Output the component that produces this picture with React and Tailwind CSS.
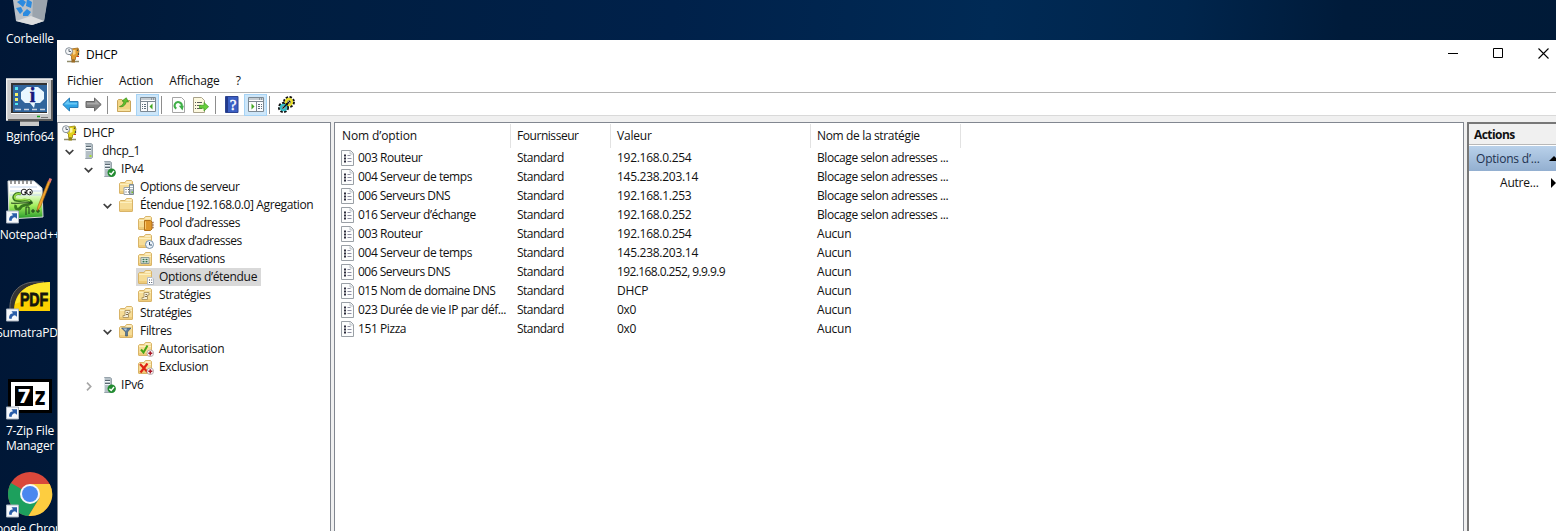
import React from "react";

/* ---------- small building blocks ---------- */

function Svg({ w = 16, h = 16, vb, className = "", children }) {
  return (
    <svg width={w} height={h} viewBox={vb || `0 0 ${w} ${h}`} className={`block shrink-0 ${className}`}>
      {children}
    </svg>
  );
}

function FolderShape() {
  return (
    <>
      <path d="M.5 4.500 V14 Q.5 14.500 1 14.500 H13 Q13.500 14.500 13.500 14 V2.500 L12.500 1.500 H7.500 L6 3.500 H1.500Z" fill="#f6dc96" stroke="#d9b468" strokeWidth="1" />
      <path d="M7.500 2.500 H12.500 V3.500 H7z" fill="#fffbe8" />
      <path d="M1 5.500 H13" stroke="#fdf0c0" strokeWidth="1" />
      <path d="M1 12 H13 V14 H1z" fill="#eecb7a" />
    </>
  );
}

function RedBadge() {
  return (
    <>
      <circle cx="12.300" cy="12.300" r="3.300" fill="#fff" stroke="#a89a9c" strokeWidth=".8" />
      <path d="M12.300 10.200 V14.400 M10.300 12.300 H14.400" stroke="#a81a2a" strokeWidth="1.600" />
    </>
  );
}

function ServerShape() {
  return (
    <>
      <path d="M4.500 .5 H10 L11.500 1.500 V14.500 L10.500 15.500 H4.500z" fill="#b4bfc6" stroke="#98a4ac" strokeWidth="1" />
      <path d="M4.500 1 V15" stroke="#dde4e8" />
      <path d="M5 3.500 H10 M5 6.500 H10" stroke="#5b6972" strokeWidth="1" />
      <path d="M5 4.500 H10 M5 7.500 H10" stroke="#f4f8fa" strokeWidth="1" />
      <path d="M8.500 12 h2 v2 h-2z" fill="#a9e030" />
    </>
  );
}

function DhcpShape({ main, light, dark }) {
  return (
    <>
      <path d="M8 12 V14 M2 14.500 H14" stroke="#8f8c6b" strokeWidth="1.300" />
      <path d="M6.500 13 h3.500 v2.500 h-3.500z" fill={dark} />
      <path d="M6 2 L13 1 L14 4 L13 9 L10.500 10 V12.500 H6.500 V9 L5 8z" fill={main} stroke={dark} strokeWidth=".8" />
      <path d="M8 3 H10.500 V7 L8 8z" fill={light} />
      <path d="M12.500 2.500 V4 M13.500 6 V8" stroke="#4b4b33" strokeWidth="1.200" />
      <path d="M12 9.500 h2" stroke="#d33b25" strokeWidth="1.200" />
      <circle cx="4" cy="4.200" r="3.500" fill="#f4f6f8" stroke="#87909a" />
      <path d="M4 2 V4.500 H6" stroke="#4e5a66" fill="none" strokeWidth=".9" />
    </>
  );
}

const folderOverlays = {
  folder: null,
  serverOptions: (
    <>
      <path d="M5 8.500 h6 v7 h-6z" fill="#fff" stroke="#9aa3ab" />
      <path d="M6.500 10.500h1M9 10.500h1M6.500 13h1M9 13h1" stroke="#555" strokeWidth="1.200" />
      <path d="M10.500 5.500 h4 v10 h-4z" fill="#aebcc4" stroke="#7c8a92" />
      <path d="M11 7.500h3M11 9.500h3" stroke="#fff" />
      <path d="M12.500 12.500h1.500v1.500h-1.500z" fill="#79bd24" />
    </>
  ),
  pool: (
    <>
      <path d="M6.500 5.500 H12.500 L14 7 V14 L12.500 15.500 H6.500z" fill="#e0972b" stroke="#b0701a" />
      <path d="M7.500 6.500 V14" stroke="#f9c66b" />
      <path d="M14.500 7.500h1M14.500 10h1M14.500 12.500h1" stroke="#7c3a10" strokeWidth="1.300" />
    </>
  ),
  leases: (
    <>
      <circle cx="11.500" cy="11.500" r="4" fill="#eef4fa" stroke="#7690aa" />
      <path d="M11.500 9 V12 H14" fill="none" stroke="#34506e" />
    </>
  ),
  reservations: (
    <>
      <path d="M3 6.500 h8 v6 h-8z" fill="#e9f1ea" stroke="#8e9a94" />
      <path d="M4.500 8.500h2M7.500 8.500h2M4.500 10.700h2M7.500 10.700h2" stroke="#36724f" strokeWidth="1.500" />
    </>
  ),
  scopeOptions: (
    <>
      <path d="M9.500 8.500 h4.500 l1.500 1.500 v5.500 h-6z" fill="#fff" stroke="#b3bbc6" />
      <path d="M11 11h1M13.200 11h1M11 13.500h1M13.200 13.500h1" stroke="#484d57" strokeWidth="1.200" />
    </>
  ),
  policies: (
    <>
      <path d="M6 5.500 H11 V8 H9.500 V12.500 H4 V10.500 H6z" fill="#f4efdc" stroke="#b19a68" />
      <path d="M7.500 7.500H9M7 9.500h2" stroke="#816e4b" />
    </>
  ),
  filters: (
    <>
      <path d="M2.500 5 H12 L8.500 9 V13 H6.500 V9z" fill="#58799a" stroke="#36506b" strokeWidth=".6" />
      <path d="M4 5.600 H8 L7 8z" fill="#b5cbdd" />
    </>
  ),
  allow: (
    <>
      <path d="M3 8.500 L5.500 11.500 L9.500 4.500" stroke="#45a516" strokeWidth="2" fill="none" />
      <RedBadge />
    </>
  ),
  deny: (
    <>
      <path d="M2 5 L9.500 13 M9.500 4.500 L2.500 13.500" stroke="#df2313" strokeWidth="2.200" fill="none" />
      <RedBadge />
    </>
  ),
};

function TreeIcon({ kind }) {
  if (kind === "dhcp")
    return (
      <Svg>
        <DhcpShape main="#e4d21b" light="#faf5a0" dark="#948514" />
      </Svg>
    );
  if (kind === "server" || kind === "serverOk")
    return (
      <Svg>
        <ServerShape />
        {kind === "serverOk" && (
          <>
            <circle cx="11.700" cy="11.700" r="4.200" fill="#228b31" />
            <path d="M9.400 11.800 L11.200 13.500 L14 10" stroke="#fff" strokeWidth="1.400" fill="none" />
          </>
        )}
      </Svg>
    );
  return (
    <Svg>
      <FolderShape />
      {folderOverlays[kind]}
    </Svg>
  );
}

function Chevron({ state }) {
  return (
    <span className="flex h-[18px] w-[19px] shrink-0 items-center justify-center pr-[4px] pt-0.5">
      {state === "open" && (
        <Svg w={9} h={6}>
          <path d="M.7 1 L4.500 4.700 L8.300 1" fill="none" stroke="#404040" strokeWidth="1.700" />
        </Svg>
      )}
      {state === "closed" && (
        <Svg w={6} h={9}>
          <path d="M1 .7 L4.700 4.500 L1 8.300" fill="none" stroke="#a6a6a6" strokeWidth="1.700" />
        </Svg>
      )}
    </span>
  );
}

/* ---------- console tree ---------- */

const indent = ["pl-[4px]", "pl-[4px]", "pl-[23px]", "pl-[42px]", "pl-[61px]"];

const tree = [
  { level: 0, icon: "dhcp", label: "DHCP" },
  { level: 1, icon: "server", label: "dhcp_1", tracking: "tracking-[-0.3px]", state: "open" },
  { level: 2, icon: "serverOk", label: "IPv4", state: "open" },
  { level: 3, icon: "serverOptions", label: "Options de serveur", tracking: "tracking-[-0.42px]" },
  { level: 3, icon: "folder", label: "Étendue [192.168.0.0] Agregation", tracking: "tracking-[-0.39px]", state: "open" },
  { level: 4, icon: "pool", label: "Pool d’adresses", tracking: "tracking-[-0.38px]" },
  { level: 4, icon: "leases", label: "Baux d’adresses", tracking: "tracking-[-0.5px]" },
  { level: 4, icon: "reservations", label: "Réservations", tracking: "tracking-[-0.5px]" },
  { level: 4, icon: "scopeOptions", label: "Options d’étendue", tracking: "tracking-[-0.31px]", selected: true },
  { level: 4, icon: "policies", label: "Stratégies", tracking: "tracking-[-0.4px]" },
  { level: 3, icon: "policies", label: "Stratégies", tracking: "tracking-[-0.4px]" },
  { level: 3, icon: "filters", label: "Filtres", tracking: "tracking-[-0.3px]", state: "open" },
  { level: 4, icon: "allow", label: "Autorisation", tracking: "tracking-[-0.28px]" },
  { level: 4, icon: "deny", label: "Exclusion", tracking: "tracking-[-0.35px]" },
  { level: 2, icon: "serverOk", label: "IPv6", state: "closed" },
];

function TreeRow({ level, icon, label, state, selected, tracking = "" }) {
  return (
    <div className={`flex h-[18px] items-center ${indent[level]}`}>
      {level > 0 && <Chevron state={state} />}
      <div className={`flex h-[18px] items-center pr-[4px] ${selected ? "-ml-[2px] bg-[#d9d9d9] pl-[2px]" : ""}`}>
        <TreeIcon kind={icon} />
        <span className={`ml-[5px] whitespace-nowrap leading-[18px] ${tracking}`}>{label}</span>
      </div>
    </div>
  );
}

/* ---------- option list ---------- */

const options = [
  ["003 Routeur", "192.168.0.254", "Blocage selon adresses ..."],
  ["004 Serveur de temps", "145.238.203.14", "Blocage selon adresses ..."],
  ["006 Serveurs DNS", "192.168.1.253", "Blocage selon adresses ..."],
  ["016 Serveur d’échange", "192.168.0.252", "Blocage selon adresses ..."],
  ["003 Routeur", "192.168.0.254", "Aucun"],
  ["004 Serveur de temps", "145.238.203.14", "Aucun"],
  ["006 Serveurs DNS", "192.168.0.252, 9.9.9.9", "Aucun"],
  ["015 Nom de domaine DNS", "DHCP", "Aucun"],
  ["023 Durée de vie IP par déf...", "0x0", "Aucun"],
  ["151 Pizza", "0x0", "Aucun"],
];

function OptionIcon() {
  return (
    <Svg w={14} h={16}>
      <path d="M.5 .5 H9.500 L12.500 3.500 V15.500 H.5z" fill="#fcfdfd" stroke="#9aa0a6" />
      <path d="M9 1 V4 H12" fill="#eceff2" stroke="#b3b9bf" strokeWidth=".8" />
      <path d="M3 5.500h2M3 8.500h2M3 11.500h2" stroke="#2d2d3c" strokeWidth="2" />
      <path d="M6.500 5.500h3M6.500 8.500h4M6.500 11.500h4" stroke="#8e8ea2" />
    </Svg>
  );
}

function OptionList() {
  return (
    <div className="mr-[3px] w-[1130px] shrink-0 border border-b-0 border-[#828790] bg-white">
      <div className="flex h-[25px] pt-px leading-[24px]">
        <div className="w-[176px] border-r border-[#e2e2e2] pl-[7px] tracking-[-0.1px]">Nom d’option</div>
        <div className="w-[100px] border-r border-[#e2e2e2] pl-[6px] tracking-[-0.45px]">Fournisseur</div>
        <div className="w-[200px] border-r border-[#e2e2e2] pl-[6px]">Valeur</div>
        <div className="w-[150px] border-r border-[#e2e2e2] pl-[6px] tracking-[-0.35px]">Nom de la stratégie</div>
      </div>
      {options.map(([name, value, policy], i) => (
        <div key={i} className="flex h-[19px] whitespace-nowrap leading-[19px] tracking-[-0.42px]">
          <div className="flex w-[182px] items-center pl-[6px]">
            <OptionIcon />
            <span className={`ml-[3px] ${name.includes("DNS") ? "tracking-[-0.5px]" : ""}`}>{name}</span>
          </div>
          <div className="w-[100px] tracking-[-0.55px]">Standard</div>
          <div className={`w-[200px] ${value.includes(",") ? "tracking-[-0.6px]" : "tracking-[-0.28px]"}`}>{value}</div>
          <div className={`w-[150px] ${policy === "Aucun" ? "tracking-[-0.2px]" : ""}`}>{policy}</div>
        </div>
      ))}
    </div>
  );
}

/* ---------- toolbar ---------- */

function Arrow({ flip, top, bottom, edge }) {
  return (
    <Svg w={17} h={15} className={flip ? "-scale-x-100" : ""}>
      <path d="M.8 7.500 L7.500 1 V4.500 H16 V10.500 H7.500 V14z" fill={bottom} stroke={edge} strokeWidth="1" />
      <path d="M2.300 7.200 L6.700 3 V5.700 H15 V7.500 H2.300z" fill={top} />
    </Svg>
  );
}

function PaneIcon({ right }) {
  return (
    <Svg w={16} h={15}>
      <path d="M.5 .5 H15.500 V14.500 H.5z" fill="#fbfcfd" stroke="#7d8993" />
      <path d="M1 1 H15 V3 H1z" fill="#c5ccd2" />
      <path d="M11 2h1M13 2h1" stroke="#59636b" />
      <path d="M.5 4.500 H15.500" stroke="#7d8993" />
      <g transform={right ? "translate(16 0) scale(-1 1)" : undefined}>
        <path d="M7.500 4.500 V14.500" stroke="#7d8993" />
        <path d="M2 7.500h1M4 7.500h2M2 9.500h1M4 9.500h2M2 11.500h1M4 11.500h2" stroke="#5d6d7b" />
        <path d="M12.500 6.500 V12.500 L9.500 9.500z" fill="#43a723" />
      </g>
    </Svg>
  );
}

function Separator({ className }) {
  return <span className={`h-[18px] w-px shrink-0 bg-[#8d8d8d] ${className}`} />;
}

function Toolbar() {
  return (
    <div className="flex h-[23px] items-center border-b border-[#d9d9d9] bg-white pl-[5px] pt-px">
      <Arrow top="#6cc8f4" bottom="#2fa4e6" edge="#2b7cb5" />
      <span className="w-[6px]" />
      <Arrow flip top="#a9a9a9" bottom="#848484" edge="#686868" />
      <Separator className="ml-[5px] mr-[9px]" />
      <Svg w={15} h={15}>
        <path d="M.5 3.500 L1.500 2.500 H5 L6 3.500 H13 L13.500 4 V14.500 H.5z" fill="#f2d584" stroke="#c9a55a" />
        <path d="M1 13 H13" stroke="#fbedb8" />
        <path d="M2.500 9.500 C5 9 6.500 7 7 4.500 L5 4 L9.300 .8 L11.500 5 L9.300 4.700 C8.500 8 6 10.500 2.500 9.500z" fill="#62c32f" stroke="#3c8d19" strokeWidth=".7" />
      </Svg>
      <span className="ml-[4px] flex h-[22px] w-[23px] items-center justify-center border border-[#a6d3f5] bg-[#cde6f9]">
        <PaneIcon />
      </span>
      <Separator className="ml-[2px] mr-[10px]" />
      <Svg w={13} h={16}>
        <path d="M.5 .5 H9.500 L12.500 3.500 V15.500 H.5z" fill="#fdfdfd" stroke="#a5a5a5" />
        <path d="M4.300 11.700 A3.600 3.600 0 1 1 9.800 9" fill="none" stroke="#3eae46" strokeWidth="2" />
        <path d="M6.800 8.800 H11.800 L10.500 13.500z" fill="#3eae46" />
      </Svg>
      <span className="w-[8px]" />
      <Svg w={16} h={16}>
        <path d="M.5 .5 H8.500 L11.500 3.500 V15.500 H.5z" fill="#fdf9df" stroke="#a9a28a" />
        <path d="M2 5.500h1M4 5.500h5M2 8.500h1M4 8.500h4M2 11.500h1M4 11.500h5" stroke="#5a5a5a" />
        <path d="M6.500 8.300 H11 V5.500 L15.600 9.700 L11 14 V11.200 H6.500z" fill="#68cf3c" stroke="#3f9d22" strokeWidth=".7" />
      </Svg>
      <Separator className="ml-[6px] mr-[9px]" />
      <Svg w={14} h={17}>
        <path d="M.5 .5 H13 V16.500 H.5z" fill="#3b5fc4" stroke="#2d4492" />
        <path d="M1 1 H3 V16 H1z" fill="#223a8c" />
        <text x="8" y="13.500" textAnchor="middle" fill="#fff" stroke="#fff" strokeWidth=".4" fontSize="15" fontFamily="Liberation Serif, serif">?</text>
      </Svg>
      <span className="ml-[5px] flex h-[22px] w-[23px] items-center justify-center border border-[#a6d3f5] bg-[#cde6f9]">
        <PaneIcon right />
      </span>
      <Separator className="ml-[2px] mr-[8px]" />
      <Svg w={17} h={17}>
        <circle cx="11" cy="6" r="3.700" fill="none" stroke="#111" strokeWidth="4.500" strokeDasharray="1.800 1.100" />
        <circle cx="11" cy="6" r="3" fill="none" stroke="#e9e02a" strokeWidth="2.300" />
        <circle cx="5.500" cy="11.500" r="3.400" fill="none" stroke="#111" strokeWidth="4.300" strokeDasharray="1.800 1.100" />
        <circle cx="5.500" cy="11.500" r="2.700" fill="none" stroke="#35bcc6" strokeWidth="2.300" />
        <path d="M4.500 12.500 L12 5" stroke="#111" strokeWidth="1.300" />
      </Svg>
    </div>
  );
}

/* ---------- MMC window ---------- */

function TitleBar() {
  return (
    <div className="flex h-[30px] items-center bg-white pl-[8px] text-black">
      <Svg className="mb-px">
        <DhcpShape main="#e09a2c" light="#f8d488" dark="#9c6b24" />
      </Svg>
      <span className="ml-[5px]">DHCP</span>
      <div className="mb-[3px] ml-auto flex items-center pr-[7px]">
        <Svg w={11} h={11}>
          <path d="M0 5.500 H10" stroke="#000" />
        </Svg>
        <Svg w={11} h={11} className="mx-[34px]">
          <path d="M.5 .5 H9.500 V9.500 H.5z" fill="none" stroke="#000" />
        </Svg>
        <Svg w={11} h={11}>
          <path d="M.5 .5 L10.500 10.500 M10.500 .5 L.5 10.500" stroke="#000" strokeWidth="1.100" />
        </Svg>
      </div>
    </div>
  );
}

function ActionsPane() {
  return (
    <div className="flex min-w-0 flex-1 flex-col overflow-hidden border-l-2 border-t-2 border-[#777777] bg-white">
      <div className="h-[21px] border-b border-[#b8b8b8] bg-[#f0f0f0] pl-[5px] font-bold leading-[21px] tracking-[-0.55px]">
        Actions
      </div>
      <div className="mt-px flex h-[25px] items-center justify-between bg-linear-to-b from-[#b9d1ea] to-[#93afd0] pl-[7px] text-[#1e3250]">
        <span className="whitespace-nowrap">Options d’...</span>
        <Svg w={7} h={6}>
          <path d="M0 5 L5 0 L7 2 V5z" fill="#000" />
        </Svg>
      </div>
      <div className="flex h-[23px] items-center justify-between pl-[31px]">
        <span>Autre...</span>
        <Svg w={5} h={10}>
          <path d="M0 0 L5 5 L0 10z" fill="#000" />
        </Svg>
      </div>
    </div>
  );
}

function ConsoleWindow() {
  return (
    <div className="mt-[40px] flex h-[491px] min-w-0 flex-1 flex-col bg-[#f0f0f0] text-[#111]">
      <TitleBar />
      <div className="flex h-[23px] items-center gap-[16px] border-b border-[#b4b4b4] bg-white pl-[10px] tracking-[-0.15px]">
        <span>Fichier</span>
        <span>Action</span>
        <span>Affichage</span>
        <span>?</span>
      </div>
      <Toolbar />
      <div className="flex min-h-0 flex-1 pt-[6px]">
        <div className="mr-[3px] w-[274px] shrink-0 border border-b-0 border-[#828790] bg-white pt-px">
          {tree.map((row, i) => (
            <TreeRow key={i} {...row} />
          ))}
        </div>
        <OptionList />
        <ActionsPane />
      </div>
    </div>
  );
}

/* ---------- desktop ---------- */

function Shortcut() {
  return (
    <g>
      <path d="M.5 35 h12 v12 h-12z" fill="#f6f8fb" stroke="#aab4c0" />
      <path d="M3 44.500 C3 41 4.500 39.500 7 39.300 L5.500 37.200 H11 V42.700 L9 41.300 C7 41.500 6 42.500 5.500 45z" fill="#2a5da8" />
    </g>
  );
}

const desktopIcons = [
  {
    label: "Corbeille",
    art: (
      <>
        <path d="M5 6 H43 L38 41 L26 45 L10 41z" fill="#b9c0c7" />
        <path d="M27 18 H42 L38 41 L26 45z" fill="#9ba4ad" />
        <path d="M10 41 L25 36 L38 41 L26 45z" fill="#dcddde" />
        <path d="M11 22 l5-3 4 3 -3 5z M21 19 l5 3 -1 6 -5-2z M10 28 l5-1 2 4 -3 3z M17 33 l4-4 4 3 -3 4 -5 0z" fill="#2b8be0" />
      </>
    ),
  },
  {
    label: "Bginfo64",
    art: (
      <>
        <path d="M14 42 H33 V48 H14z" fill="#c9c9c9" />
        <path d="M14 42 H33 V44 H14z" fill="#777" />
        <path d="M.5 1 H46 V42 H.5z" fill="#c9c9c9" stroke="#f3f3f3" strokeWidth="1.500" />
        <path d="M46 2 V42 H2" stroke="#5c5c5c" fill="none" strokeWidth="2" />
        <path d="M5 5 H42 V36 H5z" fill="#fff" />
        <path d="M5 5 H41 V35 H5z" fill="#333" />
        <path d="M7 7 H41 V34 H7z" fill="#31659c" />
        <path d="M9 9h3v3h-3zM9 25h3v2h-3z" fill="#54e6f2" />
        <path d="M9 15h3v3h-3zM9 20h3v3h-3z" fill="#f7f36a" />
        <path d="M9 31.500h6M18 31.500h5M26 31.500h5M34 31.500h5" stroke="#ccd6e2" strokeWidth="1.500" />
        <path d="M21 9 H32 L38 14 V21 L34 25 H29 L28 30 L24 25 H19 L15 21 V14z" fill="#e9f7ff" />
        <text x="26.500" y="24" textAnchor="middle" fill="#17177c" stroke="#17177c" strokeWidth=".5" fontSize="20" fontFamily="Liberation Serif, serif" fontWeight="bold">i</text>
        <path d="M31 38.500h3" stroke="#17a31d" strokeWidth="1.500" />
        <path d="M35 39.500h7" stroke="#777" />
      </>
    ),
  },
  {
    label: "Notepad++",
    art: (
      <>
        <defs>
          <linearGradient id="page" x1="0" y1="0" x2="0" y2="1">
            <stop offset="0.250" stopColor="#ffffff" />
            <stop offset="0.650" stopColor="#a4ef5d" />
            <stop offset="1" stopColor="#209628" />
          </linearGradient>
        </defs>
        <g transform="translate(0 2)">
          <path d="M2 3 L28 3 L36 10 L37 39 L3 41z" fill="url(#page)" stroke="#d5dada" />
          <path d="M4 9h27M4 13h31M4 17h31" stroke="#c5d7ee" />
          <path d="M5 2v4M9 2v4M13 2v4M17 2v4M21 2v4M25 2v4" stroke="#666" strokeWidth="1.300" />
          <path d="M15 16 C9 14 6 19 9 22 C13 24 22 20 25 24 C25 28 17 26 15 29 C13 33 8 31 10 27" fill="none" stroke="#37781f" strokeWidth="2.800" />
          <path d="M15 16 C10 15 7 18 9.500 21 C14 23 21 20 24 23" fill="none" stroke="#9cdf4c" strokeWidth="1.500" />
          <path d="M5 25 C12 26 18 24 27 25" fill="none" stroke="#1c3a18" strokeWidth="1.200" />
          <circle cx="18" cy="14" r="2.800" fill="#fff" stroke="#222" />
          <circle cx="23.500" cy="14" r="2.800" fill="#fff" stroke="#222" />
          <path d="M18.500 14.500h1.500M23.500 14.500h1.500" stroke="#000" strokeWidth="2" />
          <path d="M20 37 V29 H23 V36 M25 33h4M27 31v4M30 33h4M32 31v4" fill="none" stroke="#1b3b16" strokeWidth="1" />
          <path d="M32 28 L42 3 L44.500 4 L34.500 29 L31 33z" fill="#f1a52d" stroke="#9b5c16" strokeWidth=".6" />
          <path d="M42 3.500 L43.500 0 L46 1 L44.700 4.500z" fill="#e4756f" />
        </g>
        <Shortcut />
      </>
    ),
  },
  {
    label: "SumatraPDF",
    art: (
      <>
        <path d="M4 36 C3 20 12 9 28 8 L38 8 L10 37z" fill="#343434" stroke="#656565" />
        <path d="M8 37 C8 22 16 12 34 9 L44 8 V37z" fill="#fcd000" />
        <path d="M9 30 C12 18 20 11 34 9 L44 8 V24 C30 24 20 26 9 30z" fill="#ffe72a" />
        <text x="28" y="32" textAnchor="middle" fill="#15150e" stroke="#15150e" strokeWidth=".8" fontSize="18" textLength="28" lengthAdjust="spacingAndGlyphs" fontFamily="Liberation Sans, sans-serif" fontWeight="bold">PDF</text>
        <Shortcut />
      </>
    ),
  },
  {
    label: "7-Zip File Manager",
    art: (
      <>
        <path d="M2 7 H46 V41 H2z" fill="#000" />
        <path d="M5 10 H43 V38 H5z" fill="#fff" />
        <path d="M9 14 H27 V34 H9z" fill="#000" />
        <text x="18" y="31" textAnchor="middle" fill="#fff" fontSize="20" fontFamily="DejaVu Sans, sans-serif" fontWeight="bold">7</text>
        <text x="34" y="33" textAnchor="middle" fill="#000" fontSize="24" textLength="11" lengthAdjust="spacingAndGlyphs" fontFamily="DejaVu Sans, sans-serif" fontWeight="bold">z</text>
        <Shortcut />
      </>
    ),
  },
  {
    label: "Google Chrome",
    art: (
      <>
        <circle cx="24" cy="24" r="22" fill="#d9483b" />
        <path d="M24 24 L5 13 A22 22 0 0 0 22.500 46 L33 29z" fill="#1da05d" />
        <path d="M24 14 H43.700 A22 22 0 0 1 22.500 46 L33.500 28z" fill="#fdcd40" />
        <circle cx="24" cy="24" r="10" fill="#f5f7fa" />
        <circle cx="24" cy="24" r="8" fill="#4a87ef" />
        <Shortcut />
      </>
    ),
  },
];

function Desktop() {
  return (
    <div className="-mt-[20px] flex w-[57px] shrink-0 flex-col overflow-hidden text-white">
      {desktopIcons.map(({ label, art }) => (
        <div key={label} className="ml-[-16px] flex h-[98px] w-[92px] shrink-0 flex-col items-center">
          <Svg w={48} h={48}>
            {art}
          </Svg>
          <span className={`mt-[3px] text-center leading-[15px] ${label.startsWith("7") ? "w-[60px]" : "whitespace-nowrap"}`}>
            {label}
          </span>
        </div>
      ))}
    </div>
  );
}

export default function App() {
  return (
    <div className="flex h-[531px] w-[1556px] overflow-hidden bg-[linear-gradient(95deg,#001635_0%,#001d3f_15%,#00214a_42%,#002a55_62%,#00254c_74%,#001b3a_84%,#001a37_100%)] font-['Open_Sans','Noto_Sans',sans-serif] text-[12px] tracking-[-0.2px]">
      <Desktop />
      <ConsoleWindow />
    </div>
  );
}
